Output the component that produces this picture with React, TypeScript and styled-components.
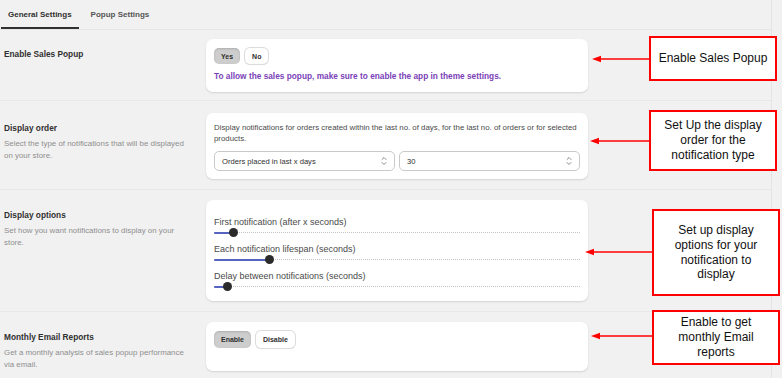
import styled, { createGlobalStyle } from "styled-components";

const GlobalStyle = createGlobalStyle`
  body {
    margin: 0;
    background: #f1f1f1;
    font-family: "Liberation Sans", Arial, sans-serif;
  }
`;

const Page = styled.div`
  position: relative;
  width: 771px;
  min-height: 378px;
  border-right: 1px solid #e4e4e4;
`;

const Tabs = styled.div`
  display: flex;
  gap: 5px;
  height: 29px;
  padding-left: 1px;
  border-bottom: 1px solid #e6e6e6;
`;

const Tab = styled.div<{ $active?: boolean }>`
  display: flex;
  align-items: center;
  padding: 2px 7px 0;
  font-size: 8px;
  font-weight: bold;
  color: ${(p) => (p.$active ? "#303030" : "#555")};
  border-bottom: 2px solid ${(p) => (p.$active ? "#303030" : "transparent")};
`;

const Section = styled.div<{ $pt: number; $pb: number }>`
  display: flex;
  padding: ${(p) => p.$pt}px 0 ${(p) => p.$pb}px 4px;
  & + & {
    border-top: 1px solid #e8e8e8;
  }
`;

const Info = styled.div`
  width: 202px;
  padding-top: 9px;
`;

const Title = styled.div`
  font-size: 8.3px;
  font-weight: bold;
  line-height: 12px;
  color: #303030;
`;

const Desc = styled.div`
  margin-top: 4px;
  max-width: 196px;
  font-size: 7.9px;
  line-height: 12px;
  color: #8f8f8f;
`;

const Card = styled.div<{ $pt?: number; $pb?: number }>`
  width: 382px;
  box-sizing: border-box;
  padding: ${(p) => p.$pt ?? 9}px 8px ${(p) => p.$pb ?? 9}px;
  background: #fff;
  border-radius: 7px;
  box-shadow: 0 1px 2px rgba(0, 0, 0, 0.13);
`;

const ButtonRow = styled.div`
  display: flex;
  gap: 5px;
`;

const Toggle = styled.div<{ $on?: boolean; $h: number }>`
  display: flex;
  align-items: center;
  height: ${(p) => p.$h}px;
  padding: 0 7px;
  box-sizing: border-box;
  border-radius: 5px;
  font-size: 7px;
  font-weight: bold;
  color: #303030;
  background: ${(p) => (p.$on ? "#cdcdcd" : "#fff")};
  box-shadow: ${(p) =>
    p.$on
      ? "inset 0 1px 2px rgba(0,0,0,0.15)"
      : "0 0 0 1px #dcdcdc, 0 1px 1px rgba(0,0,0,0.12)"};
`;

const Notice = styled.div`
  margin-top: 7px;
  font-size: 8.3px;
  font-weight: bold;
  line-height: 11px;
  color: #7b3fb8;
`;

const CardText = styled.div`
  font-size: 7.85px;
  line-height: 11px;
  color: #4a4a4a;
`;

const SelectRow = styled.div`
  display: flex;
  gap: 4px;
  margin-top: 7px;
`;

const Select = styled.div`
  flex: 1;
  display: flex;
  align-items: center;
  justify-content: space-between;
  height: 20px;
  padding: 0 6px 0 7px;
  box-sizing: border-box;
  border: 1px solid #c9c9c9;
  border-radius: 5px;
  font-size: 7.6px;
  color: #303030;
`;

const Fields = styled.div`
  display: flex;
  flex-direction: column;
  gap: 5px;
`;

const FieldLabel = styled.div`
  font-size: 9px;
  line-height: 12px;
  color: #4a4a4a;
`;

const Track = styled.div`
  position: relative;
  height: 10px;
  &::before {
    content: "";
    position: absolute;
    left: 0;
    right: 0;
    top: 4px;
    border-top: 1px dotted #c4c4c4;
  }
`;

const Fill = styled.div`
  position: absolute;
  left: 0;
  top: 4px;
  height: 2px;
  background: #5563c1;
  border-radius: 1px;
`;

const Thumb = styled.div`
  position: absolute;
  top: 0;
  width: 9px;
  height: 9px;
  margin-left: -4.5px;
  border-radius: 50%;
  background: #2b2b2b;
`;

const Callout = styled.div<{ $top: number; $left: number; $w: number; $h: number; $pad?: number }>`
  position: absolute;
  top: ${(p) => p.$top}px;
  left: ${(p) => p.$left}px;
  width: ${(p) => p.$w}px;
  height: ${(p) => p.$h}px;
  box-sizing: border-box;
  display: flex;
  align-items: center;
  justify-content: center;
  padding: 0 ${(p) => p.$pad ?? 4}px;
  background: #fff;
  border: 2px solid #ff0000;
  font-size: 12px;
  line-height: 14.7px;
  color: #111;
  text-align: center;
`;

const ArrowWrap = styled.svg<{ $top: number; $left: number }>`
  position: absolute;
  top: ${(p) => p.$top - 5}px;
  left: ${(p) => p.$left}px;
`;

const Chevrons = () => (
  <svg width="8" height="10" viewBox="0 0 8 10" fill="none" stroke="#8a8a8a" strokeWidth="1" strokeLinecap="round" strokeLinejoin="round">
    <path d="M2 3.5 L4 1.5 L6 3.5" />
    <path d="M2 6.5 L4 8.5 L6 6.5" />
  </svg>
);

const Arrow = ({ top, from, to }: { top: number; from: number; to: number }) => {
  const w = to - from;
  return (
    <ArrowWrap $top={top} $left={from} width={w} height={10} viewBox={`0 0 ${w} 10`}>
      <line x1="6" y1="5" x2={w} y2="5" stroke="#ff0000" strokeWidth="1.5" />
      <path d="M0 5 L9 1.8 L9 8.2 Z" fill="#ff0000" />
    </ArrowWrap>
  );
};

const Slider = ({ label, pos }: { label: string; pos: number }) => (
  <div>
    <FieldLabel>{label}</FieldLabel>
    <Track>
      <Fill style={{ width: pos }} />
      <Thumb style={{ left: pos }} />
    </Track>
  </div>
);

const App = () => {
  return (
    <>
      <GlobalStyle />
      <Page>
        <Tabs>
          <Tab $active>General Settings</Tab>
          <Tab>Popup Settings</Tab>
        </Tabs>

        <Section $pt={9} $pb={8}>
          <Info>
            <Title>Enable Sales Popup</Title>
          </Info>
          <Card $pb={10}>
            <ButtonRow>
              <Toggle $on $h={16}>Yes</Toggle>
              <Toggle $h={16}>No</Toggle>
            </ButtonRow>
            <Notice>To allow the sales popup, make sure to enable the app in theme settings.</Notice>
          </Card>
        </Section>

        <Section $pt={12} $pb={10}>
          <Info>
            <Title>Display order</Title>
            <Desc>
              Select the type of notifications that will be displayed
              <br />
              on your store.
            </Desc>
          </Info>
          <Card $pb={8}>
            <CardText>
              Display notifications for orders created within the last no. of days, for the last no. of orders or for selected
              <br />
              products.
            </CardText>
            <SelectRow>
              <Select>
                Orders placed in last x days
                <Chevrons />
              </Select>
              <Select>
                30
                <Chevrons />
              </Select>
            </SelectRow>
          </Card>
        </Section>

        <Section $pt={10} $pb={10}>
          <Info>
            <Title>Display options</Title>
            <Desc>
              Set how you want notifications to display on your
              <br />
              store.
            </Desc>
          </Info>
          <Card $pt={16} $pb={9}>
            <Fields>
              <Slider label="First notification (after x seconds)" pos={19} />
              <Slider label="Each notification lifespan (seconds)" pos={55} />
              <Slider label="Delay between notifications (seconds)" pos={13} />
            </Fields>
          </Card>
        </Section>

        <Section $pt={10} $pb={10}>
          <Info>
            <Title>Monthly Email Reports</Title>
            <Desc>
              Get a monthly analysis of sales popup performance
              <br />
              via email.
            </Desc>
          </Info>
          <Card $pb={8}>
            <ButtonRow>
              <Toggle $on $h={17}>Enable</Toggle>
              <Toggle $h={17}>Disable</Toggle>
            </ButtonRow>
          </Card>
        </Section>

        <Arrow top={59} from={592} to={649} />
        <Callout $top={36} $left={649} $w={128} $h={45}>Enable Sales Popup</Callout>

        <Arrow top={141} from={590} to={649} />
        <Callout $top={110} $left={649} $w={128} $h={61} $pad={8}>Set Up the display order for the notification type</Callout>

        <Arrow top={252} from={585} to={652} />
        <Callout $top={209} $left={652} $w={128} $h={87} $pad={12}>Set up display options for your notification to display</Callout>

        <Arrow top={336} from={591} to={652} />
        <Callout $top={310} $left={652} $w={128} $h={55} $pad={12}>Enable to get monthly Email reports</Callout>
      </Page>
    </>
  );
};

export default App;
